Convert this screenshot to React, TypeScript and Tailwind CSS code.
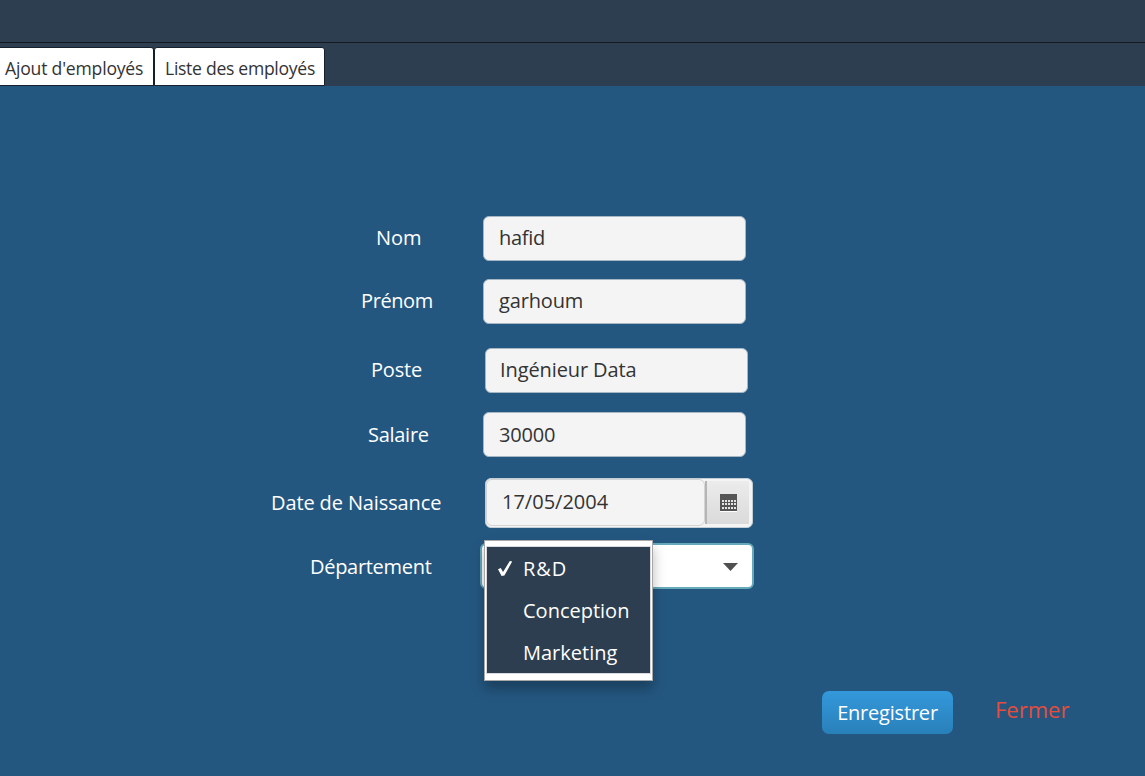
import React from "react";

function CalendarIcon() {
  return (
    <svg width="17" height="18" viewBox="0 0 17 18" shapeRendering="crispEdges">
      <rect x="0" y="17" width="17" height="1" fill="#fff" />
      <rect width="17" height="17" fill="#555" />
      {[6, 9, 13].map((y) =>
        [2, 5, 8, 11, 14].map((x) => (
          <rect key={`${x}-${y}`} x={x} y={y} width="2" height="2" fill="#e4e4e4" />
        )),
      )}
    </svg>
  );
}

type RowProps = {
  label: string;
  labelClass: string;
  className: string;
  children: React.ReactNode;
};

function Row({ label, labelClass, className, children }: RowProps) {
  return (
    <div className={`flex ${className}`}>
      <label className={`shrink-0 whitespace-nowrap text-white ${labelClass}`}>{label}</label>
      {children}
    </div>
  );
}

function TextField({ value, className }: { value: string; className: string }) {
  return (
    <div className="h-[45px] w-[263px] shrink-0 rounded-[6px] border border-[#a5b6c4] bg-[#f4f4f4] text-[#333]">
      <div className={className}>{value}</div>
    </div>
  );
}

const options = [
  { name: "R&D", selected: true, className: "tracking-[0.9px]" },
  { name: "Conception", selected: false, className: "" },
  { name: "Marketing", selected: false, className: "" },
];

export default function App() {
  return (
    <div className="flex h-[776px] w-[1145px] flex-col overflow-hidden bg-[#245780] font-['Open_Sans','Noto_Sans',sans-serif] text-[20px]">
      <header className="h-[43px] shrink-0 border-b border-[#15191f] bg-[#2d3e50]" />
      <nav className="flex h-[43px] shrink-0 bg-[#2d3e50] pt-[4px] text-[17.6px] text-[#333]">
        <div className="h-[39px] w-[154px] shrink-0 whitespace-nowrap rounded-tr-[3px] border-t border-r border-b border-[#15202c] bg-white pl-[5px] leading-[40px]">
          <span className="tracking-[-0.2px]">Ajout d'employés</span>
        </div>
        <div className="h-[39px] w-[171px] shrink-0 whitespace-nowrap rounded-t-[3px] border-t border-r border-b border-l border-[#15202c] bg-white pl-[10px] leading-[40px]">
          <span className="tracking-[-0.3px]">Liste des employés</span>
        </div>
      </nav>
      <main className="flex flex-1 flex-col pt-[130px]">
        <Row label="Nom" labelClass="w-[483px] pl-[376px] leading-[44px]" className="h-[45px]">
          <TextField value="hafid" className="pl-[15px] leading-[42px] tracking-[-0.3px]" />
        </Row>
        <Row label="Prénom" labelClass="w-[483px] pl-[361px] leading-[44px] tracking-[-0.4px]" className="mt-[18px] h-[45px]">
          <TextField value="garhoum" className="pl-[15px] leading-[42px] tracking-[-0.15px]" />
        </Row>
        <Row label="Poste" labelClass="w-[485px] pl-[371px] leading-[44px] tracking-[-0.2px]" className="mt-[24px] h-[45px]">
          <TextField value="Ingénieur Data" className="pl-[14px] leading-[42px] tracking-[-0.1px]" />
        </Row>
        <Row label="Salaire" labelClass="w-[483px] pl-[368px] leading-[45px] tracking-[-0.28px]" className="mt-[19px] h-[45px]">
          <TextField value="30000" className="pl-[15px] leading-[43px] tracking-[-0.2px]" />
        </Row>
        <Row label="Date de Naissance" labelClass="w-[485px] pl-[271px] pt-[2px] leading-[45px] tracking-[-0.12px]" className="mt-[21px] h-[50px]">
          <div className="flex h-[50px] w-[268px] shrink-0 rounded-[6px] border border-[#c3cdd6] bg-[#f4f4f4]">
            <div className="h-[47px] w-[219px] shrink-0 rounded-[6px] border border-[#d2d4d6] pl-[15px] leading-[44px] text-[#333]">
              17/05/2004
            </div>
            <div className="mt-[2px] flex h-[43px] w-[44px] shrink-0 justify-center border-l-2 border-[#b5b5b5] bg-gradient-to-b from-[#ececec] to-[#dadada] pt-[13px]">
              <CalendarIcon />
            </div>
          </div>
        </Row>
        <Row label="Département" labelClass="w-[480px] pl-[310px] leading-[47px] tracking-[-0.3px]" className="mt-[15px] h-[46px]">
          <div className="relative h-[46px] w-[274px] shrink-0 rounded-[6px] border-2 border-[#66a9b9] bg-white">
            <svg className="absolute top-[18px] right-[14px]" width="15" height="8" viewBox="0 0 15 8">
              <path d="M0 0h15L7.5 8z" fill="#505050" />
            </svg>
            <ul className="absolute top-[-5px] left-[2px] h-[141px] w-[169px] border border-[#a8a8a8] bg-white px-[2px] pt-[6px] shadow-[0_8px_12px_rgba(0,0,0,0.28)]">
              <li className="h-[126px] w-[163px] bg-[#2d3e50] text-white outline-1 outline-[#d8dadd]">
                <ul>
                  {options.map((o) => (
                    <li key={o.name} className="flex h-[42px] items-center pt-[2px]">
                      <span className="flex w-[36px] shrink-0 justify-center">
                        {o.selected && (
                          <svg width="16" height="17" viewBox="0 0 16 17">
                            <path d="M1 8.2 3.8 7 6 11 12.8 0 15.2 .4 7.4 14.6 4.6 15z" fill="#fff" />
                          </svg>
                        )}
                      </span>
                      <span className={o.className}>{o.name}</span>
                    </li>
                  ))}
                </ul>
              </li>
            </ul>
          </div>
        </Row>
        <div className="mt-[102px] flex pl-[822px]">
          <button className="h-[43px] w-[131px] rounded-[7px] bg-gradient-to-b from-[#3498db] to-[#2980b9] leading-[43px] tracking-[-0.2px] text-white">
            Enregistrer
          </button>
          <button className="ml-[42px] h-[36px] text-left text-[22px] leading-[36px] text-[#e74c3c]">Fermer</button>
        </div>
      </main>
    </div>
  );
}
